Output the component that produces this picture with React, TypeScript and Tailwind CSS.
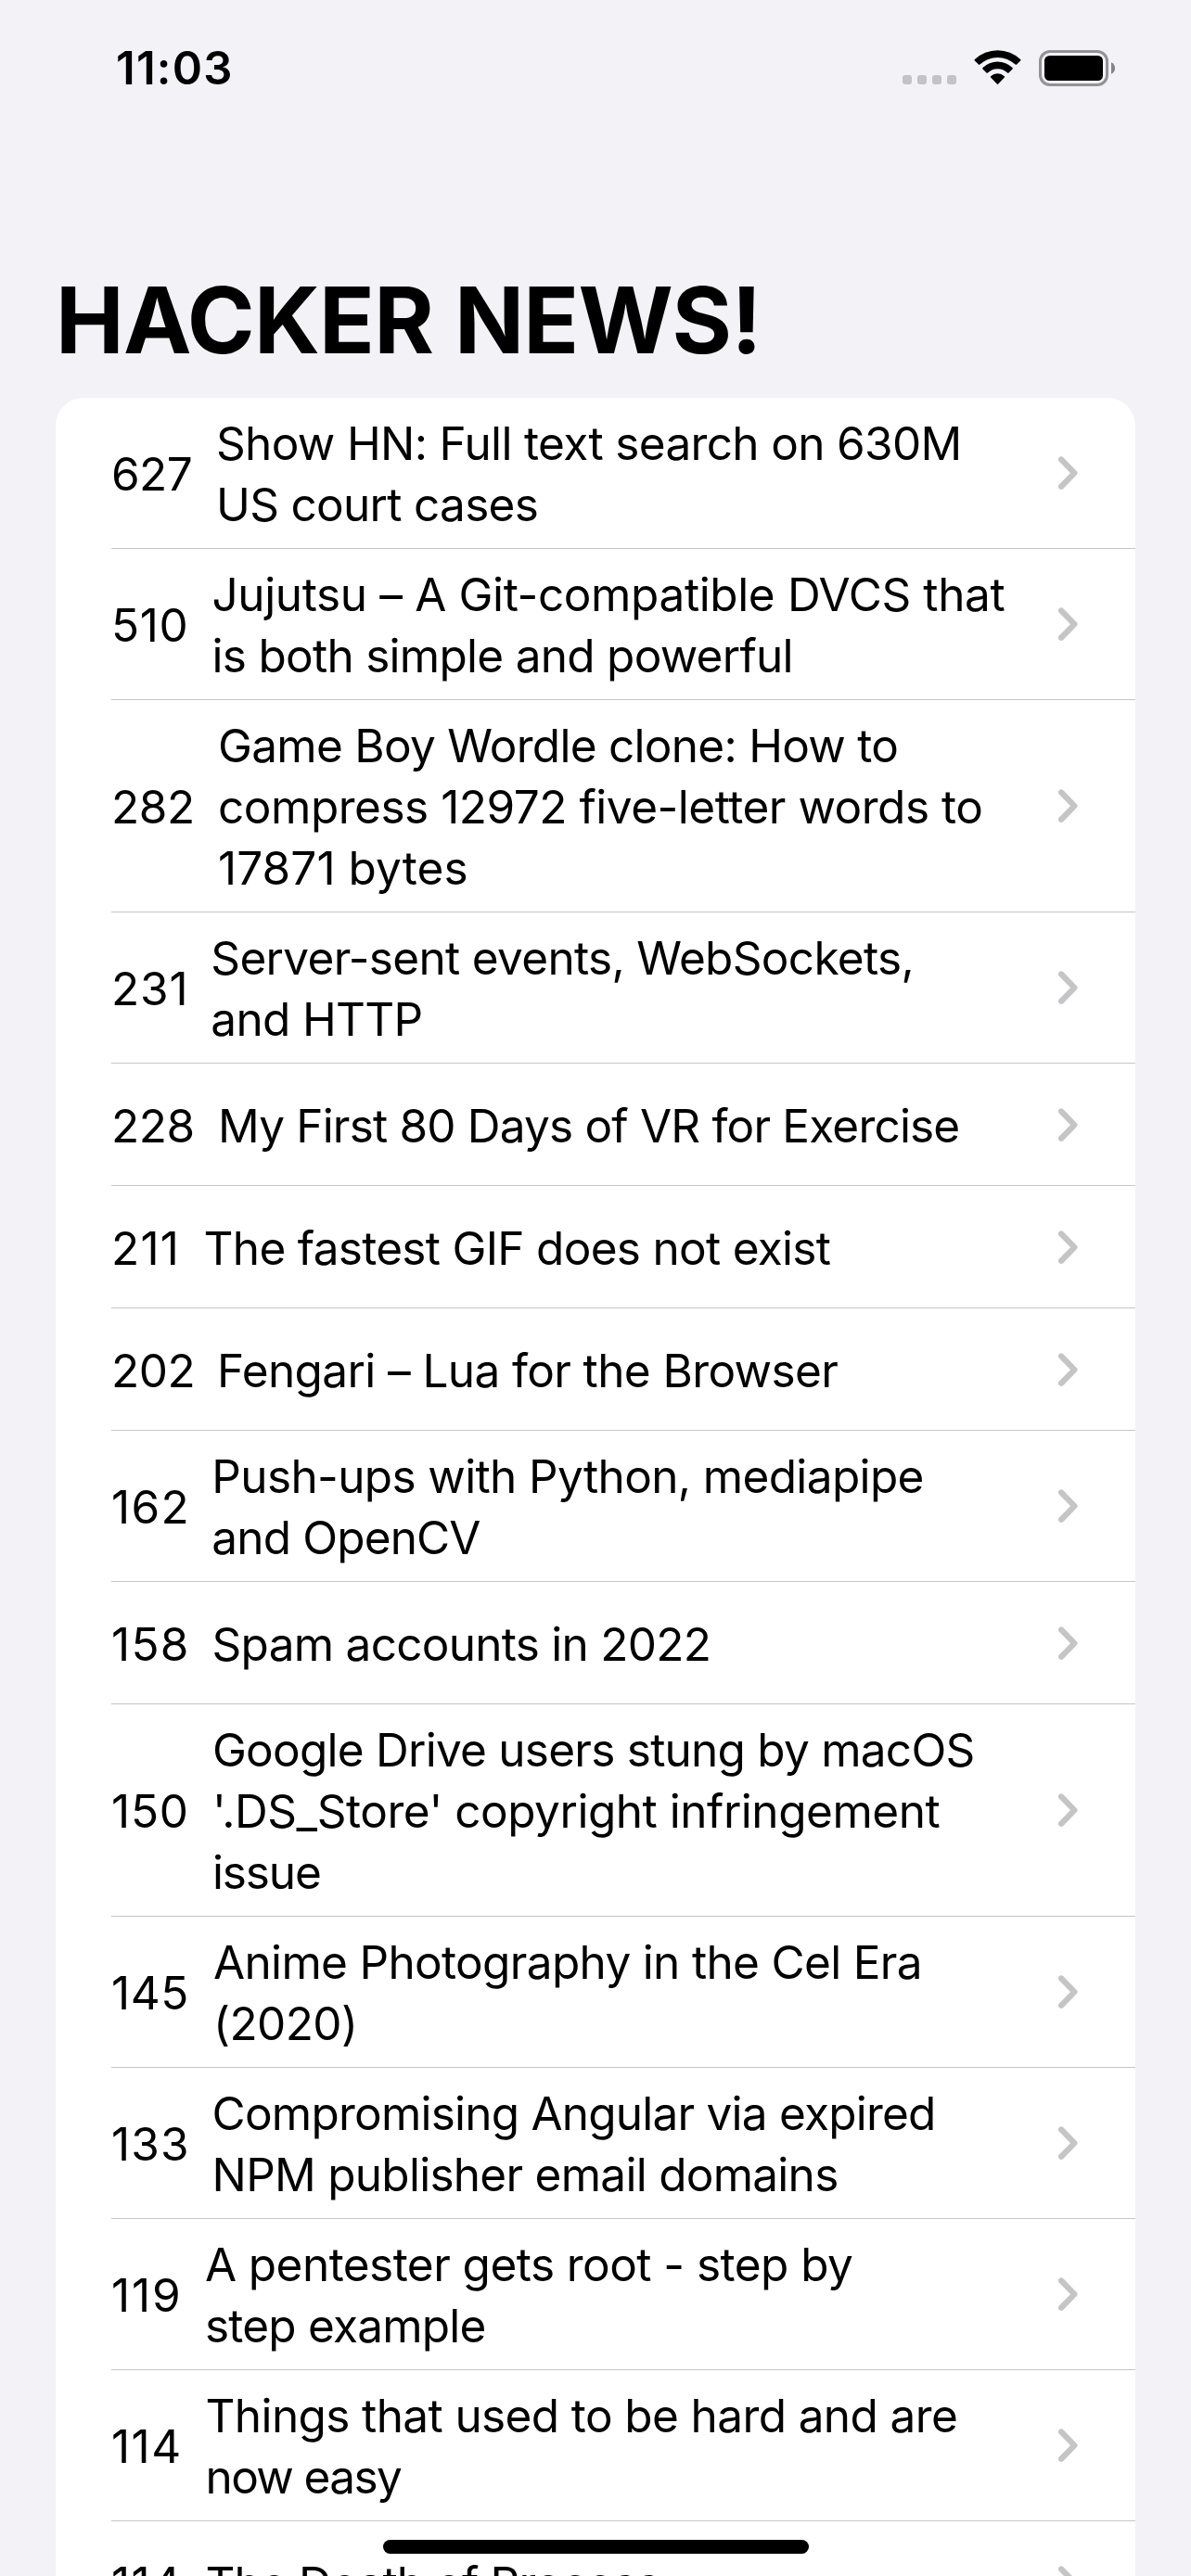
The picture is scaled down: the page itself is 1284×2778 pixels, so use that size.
import React from "react";

type Line = [text: string, tracking: string];

type Story = {
  points: string;
  pointsClass: string;
  lines: Line[];
};

const stories: Story[] = [
  {
    points: "627",
    pointsClass: "w-[113px] tracking-[-0.6px]",
    lines: [
      ["Show HN: Full text search on 630M", "tracking-[-0.66px]"],
      ["US court cases", "tracking-[-0.7px]"],
    ],
  },
  {
    points: "510",
    pointsClass: "w-[108.5px] tracking-[0.6px]",
    lines: [
      ["Jujutsu – A Git-compatible DVCS that", "tracking-[-0.38px]"],
      ["is both simple and powerful", "tracking-[-0.72px]"],
    ],
  },
  {
    points: "282",
    pointsClass: "w-[115px] tracking-[-0.4px]",
    lines: [
      ["Game Boy Wordle clone: How to", "tracking-[-0.72px]"],
      ["compress 12972 five-letter words to", "tracking-[-0.48px]"],
      ["17871 bytes", "tracking-[0.08px]"],
    ],
  },
  {
    points: "231",
    pointsClass: "w-[107.3px] tracking-[0.9px]",
    lines: [
      ["Server-sent events, WebSockets,", "tracking-[-0.67px]"],
      ["and HTTP", "tracking-[-0.67px]"],
    ],
  },
  {
    points: "228",
    pointsClass: "w-[115px] tracking-[-0.4px]",
    lines: [["My First 80 Days of VR for Exercise", "tracking-[-0.81px]"]],
  },
  {
    points: "211",
    pointsClass: "w-[99.6px] tracking-[1.2px]",
    lines: [["The fastest GIF does not exist", "tracking-[-0.7px]"]],
  },
  {
    points: "202",
    pointsClass: "w-[114px] tracking-[-0.5px]",
    lines: [["Fengari – Lua for the Browser", "tracking-[-0.61px]"]],
  },
  {
    points: "162",
    pointsClass: "w-[108.3px] tracking-[1.3px]",
    lines: [
      ["Push-ups with Python, mediapipe", "tracking-[-0.63px]"],
      ["and OpenCV", "tracking-[-0.85px]"],
    ],
  },
  {
    points: "158",
    pointsClass: "w-[108.6px] tracking-[1.3px]",
    lines: [["Spam accounts in 2022", "tracking-[-0.73px]"]],
  },
  {
    points: "150",
    pointsClass: "w-[108.9px] tracking-[0.8px]",
    lines: [
      ["Google Drive users stung by macOS", "tracking-[-0.75px]"],
      ["'.DS_Store' copyright infringement", "tracking-[-0.47px]"],
      ["issue", "tracking-[-1.1px]"],
    ],
  },
  {
    points: "145",
    pointsClass: "w-[110px] tracking-[0.6px]",
    lines: [
      ["Anime Photography in the Cel Era", "tracking-[-0.67px]"],
      ["(2020)", "tracking-[-0.6px]"],
    ],
  },
  {
    points: "133",
    pointsClass: "w-[108.6px] tracking-[1.2px]",
    lines: [
      ["Compromising Angular via expired", "tracking-[-0.78px]"],
      ["NPM publisher email domains", "tracking-[-0.73px]"],
    ],
  },
  {
    points: "119",
    pointsClass: "w-[100.9px] tracking-[1.9px]",
    lines: [
      ["A pentester gets root - step by", "tracking-[-0.55px]"],
      ["step example", "tracking-[-0.77px]"],
    ],
  },
  {
    points: "114",
    pointsClass: "w-[101.5px] tracking-[1.47px]",
    lines: [
      ["Things that used to be hard and are", "tracking-[-0.61px]"],
      ["now easy", "tracking-[-1.6px]"],
    ],
  },
  {
    points: "114",
    pointsClass: "w-[101.5px] tracking-[1.47px]",
    lines: [["The Death of Process", "tracking-[-0.85px]"]],
  },
];

const rowHeights: Record<number, string> = {
  1: "h-[132px] pt-px",
  2: "h-[163px]",
  3: "h-[229px]",
};

function WifiIcon() {
  return (
    <svg className="h-[38px] w-[51px]" viewBox="0 0 51 38" fill="#000">
      <path d="M.9 10.1a35.6 35.6 0 0 1 49.2 0q.8.7 0 1.4l-4 4q-.7.7-1.4 0a28.2 28.2 0 0 0-38.4 0q-.7.7-1.4 0l-4-4q-.8-.7 0-1.4z" />
      <path d="M9.5 19.1a23 23 0 0 1 32 0q.7.7 0 1.4l-4 4q-.7.7-1.4 0a15.4 15.4 0 0 0-21.2 0q-.7.7-1.4 0l-4-4q-.7-.7 0-1.4z" />
      <path d="M18.1 28.2a10.8 10.8 0 0 1 14.8 0q.7.7 0 1.4l-6.7 7q-.7.7-1.4 0l-6.7-7q-.7-.7 0-1.4z" />
    </svg>
  );
}

function BatteryIcon() {
  return (
    <svg className="h-[39px] w-[83px]" viewBox="0 0 83 39">
      <rect x="1.5" y="1.5" width="72" height="36" rx="10.5" fill="none" stroke="#939296" strokeWidth="3" />
      <rect x="6" y="6" width="63" height="27" rx="5.5" fill="#000" />
      <path d="M78 13.2c5.4 2.2 5.4 10.4 0 12.6z" fill="#858488" />
    </svg>
  );
}

function Chevron() {
  return (
    <svg className="h-[37px] w-[22px] shrink-0" viewBox="0 0 22 37" fill="none">
      <path
        d="M4.1 3.5 18.4 18.1 4.1 32.700"
        stroke="#c5c5c7"
        strokeWidth="6.3"
        strokeLinecap="round"
        strokeLinejoin="round"
      />
    </svg>
  );
}

function StoryRow({ story }: { story: Story }) {
  return (
    <li
      className={`${rowHeights[story.lines.length]} flex shrink-0 items-center justify-between border-b border-[#c6c6c8] pr-[62px]`}
    >
      <div className="flex items-center pt-[2px] whitespace-nowrap">
        <span className={`${story.pointsClass} shrink-0`}>{story.points}</span>
        <div>
          {story.lines.map(([text, tracking]) => (
            <div key={text} className={tracking}>
              {text}
            </div>
          ))}
        </div>
      </div>
      <Chevron />
    </li>
  );
}

export default function App() {
  return (
    <div className="relative flex h-[2778px] w-[1284px] flex-col overflow-hidden bg-[#f2f2f7] font-['Inter',sans-serif] text-black">
      <header className="flex h-[146px] shrink-0 items-center justify-between pr-[81px] pl-[125px]">
        <span className="pt-[2px] text-[49px] leading-[60px] font-semibold tracking-[1.2px]">11:03</span>
        <div className="flex items-center">
          <div className="mt-[26px] mr-[19px] flex gap-[6px]">
            <i className="size-[10px] rounded-[3px] bg-[#c3c2c7]" />
            <i className="size-[10px] rounded-[3px] bg-[#c3c2c7]" />
            <i className="size-[10px] rounded-[3px] bg-[#c3c2c7]" />
            <i className="size-[10px] rounded-[3px] bg-[#c3c2c7]" />
          </div>
          <div className="mr-[19px]">
            <WifiIcon />
          </div>
          <BatteryIcon />
        </div>
      </header>

      <h1 className="mt-[139px] ml-[60px] shrink-0 text-[98.6px] leading-[120px] font-bold tracking-[-0.72px] whitespace-nowrap">
        HACKER NEWS!
      </h1>

      <main className="mx-[60px] mt-[24px] rounded-t-[30px] bg-white pl-[60px]">
        <ul className="flex flex-col text-[49.5px] leading-[66px]">
          {stories.map((story, index) => (
            <StoryRow key={index} story={story} />
          ))}
        </ul>
      </main>

      <div className="absolute bottom-[24px] left-[413px] h-[15px] w-[459px] rounded-full bg-black" />
    </div>
  );
}
